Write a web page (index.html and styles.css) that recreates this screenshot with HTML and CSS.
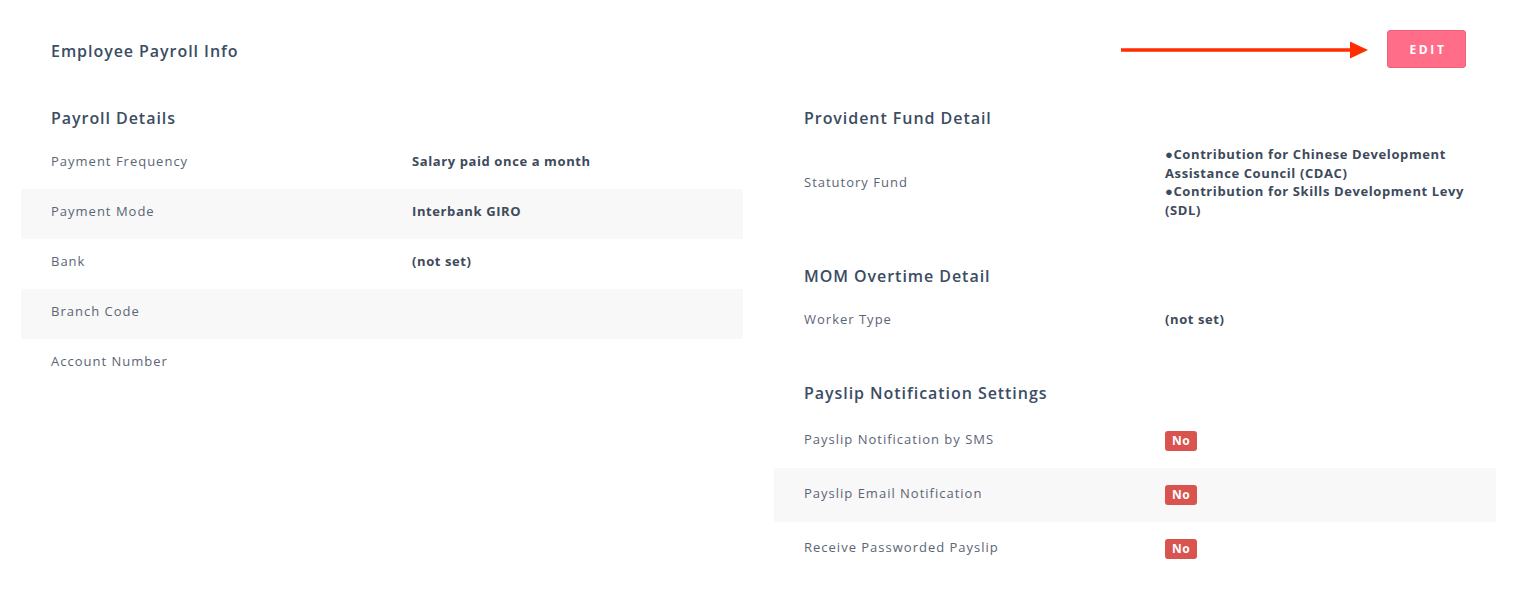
FILE: index.html
```html
<!DOCTYPE html>
<html>
<head>
<meta charset="utf-8">
<link rel="stylesheet" href="styles.css">
</head>
<body>
<div class="page">
  <div class="header">
    <h1 class="title">Employee Payroll Info</h1>
    <button class="edit-btn">EDIT</button>
    <div class="arrow">
      <svg width="250" height="20" viewBox="0 0 250 20">
        <line x1="0" y1="10" x2="232" y2="10" stroke="#ff2d00" stroke-width="3.5"/>
        <polygon points="229,1.5 247,10 229,18.5" fill="#ff2d00"/>
      </svg>
    </div>
  </div>
  <div class="columns">
    <div class="col">
      <section class="section">
        <h2 class="section-title">Payroll Details</h2>
        <div class="row"><div class="label">Payment Frequency</div><div class="value">Salary paid once a month</div></div>
        <div class="row striped"><div class="label">Payment Mode</div><div class="value">Interbank GIRO</div></div>
        <div class="row"><div class="label">Bank</div><div class="value">(not set)</div></div>
        <div class="row striped"><div class="label">Branch Code</div><div class="value"></div></div>
        <div class="row"><div class="label">Account Number</div><div class="value"></div></div>
      </section>
    </div>
    <div class="col">
      <section class="section">
        <h2 class="section-title">Provident Fund Detail</h2>
        <div class="row tall"><div class="label">Statutory Fund</div><div class="value">●Contribution for Chinese Development Assistance Council (CDAC)<br>●Contribution for Skills Development Levy (SDL)</div></div>
      </section>
      <section class="section">
        <h2 class="section-title">MOM Overtime Detail</h2>
        <div class="row"><div class="label">Worker Type</div><div class="value">(not set)</div></div>
      </section>
      <section class="section">
        <h2 class="section-title">Payslip Notification Settings</h2>
        <div class="row badge-row"><div class="label">Payslip Notification by SMS</div><div class="value"><span class="badge">No</span></div></div>
        <div class="row badge-row striped"><div class="label">Payslip Email Notification</div><div class="value"><span class="badge">No</span></div></div>
        <div class="row badge-row"><div class="label">Receive Passworded Payslip</div><div class="value"><span class="badge">No</span></div></div>
      </section>
    </div>
  </div>
</div>
</body>
</html>
```

FILE: styles.css
```css
* { box-sizing: border-box; }
body {
  margin: 0;
  background: #ffffff;
  font-family: "Open Sans", "Noto Sans", Arial, sans-serif;
  color: #3d4b5e;
}
.page {
  padding: 30px 27px 0 21px;
}
.header {
  position: relative;
  display: flex;
  align-items: center;
  justify-content: space-between;
  padding: 0 30px 0 30px;
  height: 38px;
}
.title {
  margin: 3px 0 0 0;
  font-size: 16px;
  font-weight: 600;
  letter-spacing: 0.95px;
  color: #3b4c63;
}
.edit-btn {
  width: 79px;
  height: 38px;
  border: 1px solid #f0607d;
  border-radius: 3px;
  background: #ff6d89;
  color: #ffffff;
  font-family: "Open Sans", Arial, sans-serif;
  font-size: 12px;
  font-weight: 700;
  letter-spacing: 2.6px;
  padding: 0 0 0 3px;
}
.arrow {
  position: absolute;
  left: 1100px;
  top: 10px;
  line-height: 0;
}
.columns {
  display: grid;
  grid-template-columns: 1fr 1fr;
  column-gap: 31px;
  margin-top: 40px;
}
.section + .section {
  margin-top: 36px;
}
.section-title {
  margin: 0 0 11px 0;
  padding-left: 30px;
  font-size: 16px;
  line-height: 20px;
  font-weight: 600;
  letter-spacing: 0.95px;
  color: #3b4c63;
}
.row {
  display: grid;
  grid-template-columns: 1fr 1fr;
  align-items: center;
  padding: 13px 0 19px 0;
  font-size: 13px;
  line-height: 18px;
}
.row.striped { background: #f8f8f8; }
.row.tall { padding: 6px 0 11px 0; line-height: 18.5px; }
.row.badge-row {
  align-items: start;
  height: 54px;
  padding: 0;
}
.badge-row .label { padding-top: 16px; }
.badge-row .value { padding-top: 17px; line-height: 20px; }
.label {
  padding: 0 30px;
  color: #5b6575;
  letter-spacing: 1px;
}
.value {
  padding: 0 30px;
  font-weight: 700;
  color: #3d4a5b;
  letter-spacing: 0.6px;
}
.badge {
  display: block;
  width: 32px;
  height: 20px;
  line-height: 20px;
  text-align: center;
  background: #d9534f;
  color: #ffffff;
  border-radius: 3px;
  font-size: 12px;
  font-weight: 700;
  letter-spacing: 0.3px;
}
```
